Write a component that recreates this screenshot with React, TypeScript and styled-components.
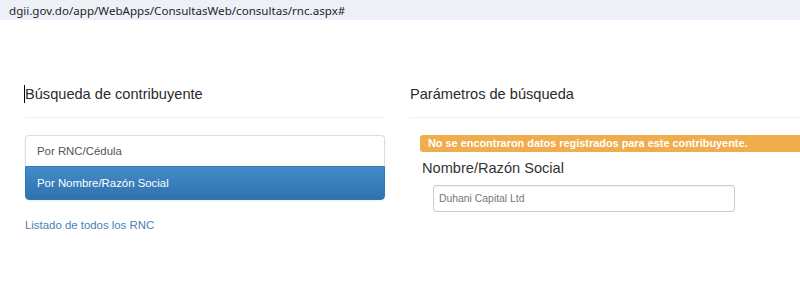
import React from 'react';
import styled, { createGlobalStyle } from 'styled-components';

const Global = createGlobalStyle`
  html, body { margin: 0; padding: 0; background: #fff; }
  body { font-family: "Liberation Sans", Arial, sans-serif; color: #333; }
  * { box-sizing: border-box; }
`;

const AddressBar = styled.div`
  height: 20px;
  background: #edf1f7;
  display: flex;
  align-items: center;
  padding-left: 9px;
  font-family: "Noto Sans", sans-serif;
  font-size: 11.6px;
  color: #1f1f1f;
  white-space: nowrap;
`;

const Layout = styled.div`
  display: grid;
  grid-template-columns: 360px 1fr;
  column-gap: 25px;
  padding: 66px 0 0 25px;
  overflow: hidden;
`;

const Column = styled.div`
  display: flex;
  flex-direction: column;
  align-items: flex-start;
  min-width: 0;
`;

const Heading = styled.h4`
  position: relative;
  margin: 0;
  font-size: 14.6px;
  line-height: 16px;
  font-weight: 400;
  color: #2b2b2b;
`;

const Caret = styled.span`
  position: absolute;
  left: -1px;
  top: -1px;
  width: 1px;
  height: 18px;
  background: #000;
`;

const Rule = styled.hr`
  align-self: stretch;
  margin: 15px 0 17px;
  border: 0;
  border-top: 1px solid #f0f0f0;
  height: 0;
`;

const ListGroup = styled.div`
  align-self: stretch;
  display: flex;
  flex-direction: column;
  border-radius: 4px;
  box-shadow: 0 1px 2px rgba(0, 0, 0, 0.075);
`;

const ListItem = styled.a<{ $active?: boolean }>`
  display: block;
  padding: ${p => (p.$active ? '8px 11px' : '7px 11px')};
  font-size: 11.4px;
  line-height: 16px;
  text-decoration: none;
  color: ${p => (p.$active ? '#fff' : '#555')};
  background: ${p => (p.$active ? 'linear-gradient(to bottom, #428bca 0%, #2f72ad 100%)' : '#fff')};
  border: 1px solid ${p => (p.$active ? '#3278b3' : '#ddd')};
  &:first-child { border-radius: 4px 4px 0 0; border-bottom: 0; }
  &:last-child { border-radius: 0 0 4px 4px; }
`;

const Link = styled.a`
  margin-top: 17px;
  font-size: 11.4px;
  line-height: 16px;
  color: #4a80b4;
  text-decoration: none;
`;

const WarningLabel = styled.div`
  align-self: stretch;
  margin-left: 10px;
  height: 17px;
  padding: 0 8px;
  background: #f0ad4e;
  border-radius: 3px 0 0 3px;
  color: #fff;
  font-weight: 700;
  font-size: 10.9px;
  line-height: 17px;
  white-space: nowrap;
`;

const FieldLabel = styled.label`
  margin: 8px 0 0 12px;
  font-size: 14.6px;
  line-height: 16px;
  color: #333;
`;

const Input = styled.div`
  margin: 9px 0 0 23px;
  width: 302px;
  height: 27px;
  border: 1px solid #ccc;
  border-radius: 3px;
  padding-left: 5px;
  display: flex;
  align-items: center;
  font-size: 10.4px;
  color: #777;
  box-shadow: inset 0 1px 1px rgba(0, 0, 0, 0.05);
`;

export default function App() {
  return (
    <>
      <Global />
      <AddressBar>dgii.gov.do/app/WebApps/ConsultasWeb/consultas/rnc.aspx#</AddressBar>
      <Layout>
        <Column>
          <Heading>
            <Caret />
            Búsqueda de contribuyente
          </Heading>
          <Rule />
          <ListGroup>
            <ListItem href="#">Por RNC/Cédula</ListItem>
            <ListItem href="#" $active>Por Nombre/Razón Social</ListItem>
          </ListGroup>
          <Link href="#">Listado de todos los RNC</Link>
        </Column>
        <Column>
          <Heading>Parámetros de búsqueda</Heading>
          <Rule />
          <WarningLabel>No se encontraron datos registrados para este contribuyente.</WarningLabel>
          <FieldLabel>Nombre/Razón Social</FieldLabel>
          <Input>Duhani Capital Ltd</Input>
        </Column>
      </Layout>
    </>
  );
}
